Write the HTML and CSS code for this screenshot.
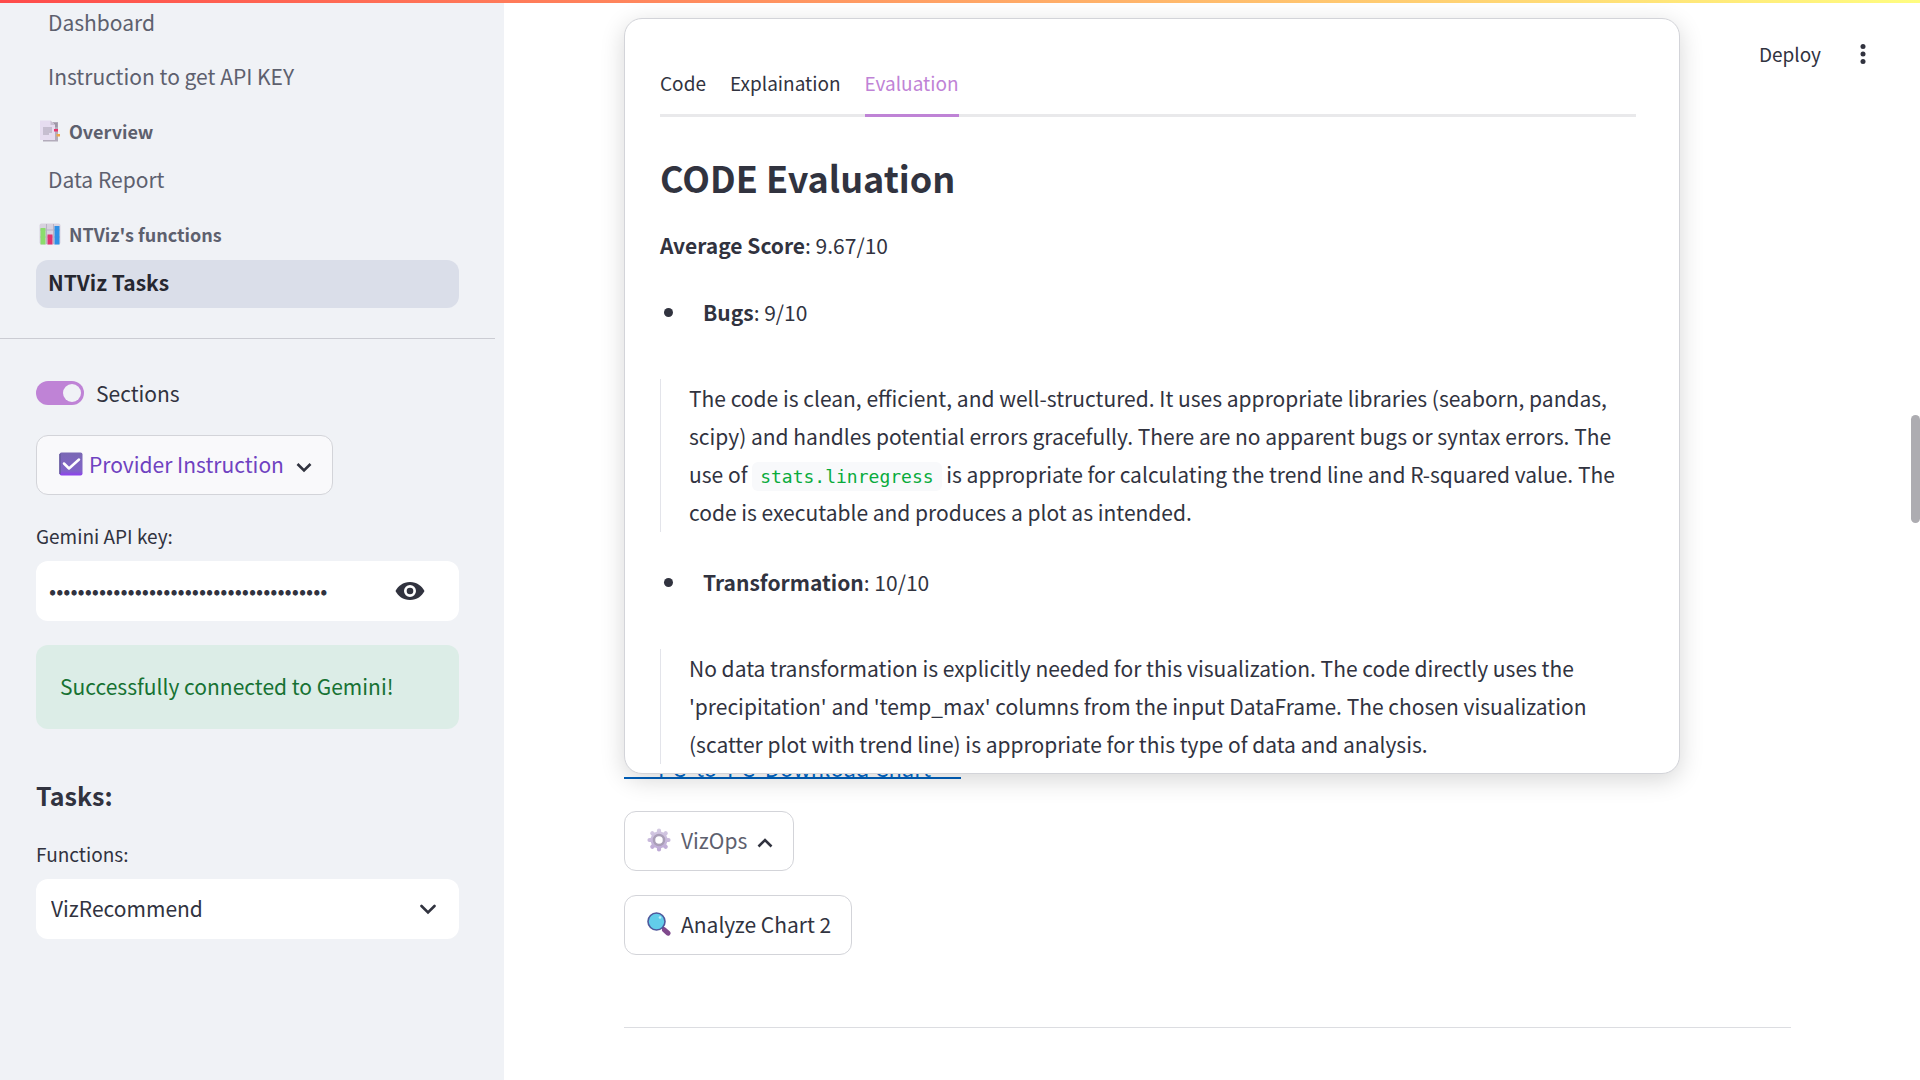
FILE: index.html
```
<!DOCTYPE html>
<html lang="en">
<head>
<meta charset="utf-8">
<title>NTViz Tasks</title>
<link rel="stylesheet" href="styles.css">
</head>
<body>
<div class="decoration"></div>
<div class="app">
  <aside class="sidebar">
    <nav class="nav">
      <a class="nav-link" href="#dashboard">Dashboard</a>
      <a class="nav-link" href="#instruction">Instruction to get API KEY</a>
      <div class="nav-section">
        <svg class="nav-icon" viewBox="0 0 22 22" aria-hidden="true">
          <path d="M4 2h15v19.500H4z" fill="#b3acbb"/>
          <path d="M15 3h3.500v4H15z" fill="#9d97a6"/>
          <path d="M1 .5h10.500l4.500 4.500v15H1z" fill="#e6dcf0"/>
          <path d="M11.500.5v4.500H16z" fill="#c9bfd2"/>
          <path d="M4 8h9M4 10h9M4 12h9M4 14h6" stroke="#a69fb0" stroke-width="1"/>
          <path d="M15 9h4v2.500h-4z" fill="#e8366f"/>
          <path d="M17.500 14h3.500v2.500h-3.500z" fill="#eea64c"/>
        </svg>
        <span>Overview</span>
      </div>
      <a class="nav-link" href="#report">Data Report</a>
      <div class="nav-section">
        <svg class="nav-icon" viewBox="0 0 22 22" aria-hidden="true">
          <rect x=".5" y=".5" width="21" height="21" rx="2" fill="#d8d2df"/>
          <path d="M7.500 1v20M14.500 1v20M1 7h20M1 14h20" stroke="#b9b2c4" stroke-width="1"/>
          <rect x="1.500" y="5" width="5" height="16.500" fill="#8bdc6c"/>
          <rect x="8.500" y="11.500" width="5" height="10" fill="#e0336f"/>
          <rect x="15.500" y="3" width="5" height="18.500" fill="#2e90e6"/>
        </svg>
        <span>NTViz's functions</span>
      </div>
      <a class="nav-link nav-link-active" href="#tasks">NTViz Tasks</a>
    </nav>
    <div class="controls">
      <label class="toggle"><input type="checkbox" checked><span>Sections</span></label>
      <button class="button button-provider" type="button">
        <svg class="button-icon" viewBox="0 0 24 24" aria-hidden="true">
          <defs><linearGradient id="tick" x1="0" y1="0" x2="0" y2="1"><stop offset="0" stop-color="#7a68b4"/><stop offset=".8" stop-color="#8163c8"/><stop offset="1" stop-color="#8f3ff0"/></linearGradient></defs>
          <rect x=".5" y=".5" width="23" height="23" rx="2" fill="url(#tick)"/>
          <path d="M1 2v20" stroke="#645a9c" stroke-width="1.500"/>
          <path d="M5 11.500l5 5L20 7.500" fill="none" stroke="#fff" stroke-width="2.500" stroke-linecap="round" stroke-linejoin="round"/>
        </svg>
        <span>Provider Instruction</span>
        <svg class="chevron" viewBox="0 0 16 16" aria-hidden="true"><path d="M1.500 5L8 11.500 14.500 5"/></svg>
      </button>
      <label class="field-label" for="api-key">Gemini API key:</label>
      <div class="field">
        <input class="field-input" id="api-key" type="password" value="abcdefghijklmnopqrstuvwxyz0123456789abc">
        <button class="eye" type="button" aria-label="Show password">
          <svg viewBox="0 0 30 20" aria-hidden="true">
            <path fill-rule="evenodd" d="M15 1C8 1 3 5 .5 10 3 15 8 19 15 19s12-4 14.500-9C27 5 22 1 15 1zm0 3a6 6 0 1 1 0 12 6 6 0 0 1 0-12zm0 2.700a3.300 3.300 0 1 0 0 6.600 3.300 3.300 0 0 0 0-6.600z"/>
          </svg>
        </button>
      </div>
      <div class="alert" role="status">Successfully connected to Gemini!</div>
      <h3 class="controls-title">Tasks:</h3>
      <label class="field-label" for="functions">Functions:</label>
      <div class="field">
        <select class="field-select" id="functions"><option>VizRecommend</option></select>
        <svg class="chevron" viewBox="0 0 16 16" aria-hidden="true"><path stroke-linecap="round" d="M1.500 5L8 11.500 14.500 5"/></svg>
      </div>
    </div>
  </aside>
  <main class="main">
    <a class="download" href="#download">PC&nbsp; to &nbsp;PC&nbsp; Download Chart</a>
    <button class="button button-muted" type="button">
      <svg class="button-icon" viewBox="0 0 24 24" aria-hidden="true">
        <defs><linearGradient id="gear" gradientUnits="userSpaceOnUse" x1="0" y1="0" x2="0" y2="24"><stop offset="0" stop-color="#d6cde3"/><stop offset="1" stop-color="#bba6d4"/></linearGradient></defs>
        <g stroke="url(#gear)" stroke-width="4.200" stroke-linecap="round">
          <path d="M12 2.500V21.500M2.500 12H21.500M5.300 5.300l13.400 13.400M18.700 5.300L5.300 18.700"/>
        </g>
        <circle cx="12" cy="12" r="8.500" fill="url(#gear)"/>
        <circle cx="12" cy="12" r="5" fill="#fff" stroke="#aa9fb8" stroke-width="2.500"/>
      </svg>
      <span>VizOps</span>
      <svg class="chevron" viewBox="0 0 16 16" aria-hidden="true"><path d="M1.500 11.500L8 5l6.500 6.500"/></svg>
    </button>
    <button class="button" type="button">
      <svg class="button-icon" viewBox="0 0 24 24" aria-hidden="true">
        <path d="M15.500 15.500l2 2" stroke="#5b4a85" stroke-width="3"/>
        <path d="M17.500 18l3.500 3.200" stroke="#80498c" stroke-width="5" stroke-linecap="round"/>
        <circle cx="9.500" cy="9.500" r="8.500" fill="#62cdea" stroke="#4f589c" stroke-width="1.600"/>
        <circle cx="13" cy="5.500" r="1.300" fill="#b9effa"/>
      </svg>
      <span>Analyze Chart 2</span>
    </button>
    <hr class="divider">
    <section class="popover" aria-label="VizOps">
      <div class="tabs" role="tablist">
        <button class="tab" type="button" role="tab">Code</button>
        <button class="tab" type="button" role="tab">Explaination</button>
        <button class="tab tab-active" type="button" role="tab" aria-selected="true">Evaluation</button>
      </div>
      <h2 class="report-title">CODE Evaluation</h2>
      <p class="report-score"><strong>Average Score</strong>: 9.67/10</p>
      <ul class="report-item"><li><strong>Bugs</strong>: 9/10</li></ul>
      <blockquote class="report-quote">The code is clean, efficient, and well-structured. It uses appropriate libraries (seaborn, pandas, scipy) and handles potential errors gracefully. There are no apparent bugs or syntax errors. The use of <code>stats.linregress</code> is appropriate for calculating the trend line and R-squared value. The code is executable and produces a plot as intended.</blockquote>
      <ul class="report-item"><li><strong>Transformation</strong>: 10/10</li></ul>
      <blockquote class="report-quote">No data transformation is explicitly needed for this visualization. The code directly uses the 'precipitation' and 'temp_max' columns from the input DataFrame. The chosen visualization (scatter plot with trend line) is appropriate for this type of data and analysis.</blockquote>
    </section>
    <div class="toolbar">
      <button class="deploy" type="button">Deploy</button>
      <button class="menu" type="button" aria-label="Menu">
        <svg viewBox="0 0 6 20" aria-hidden="true"><circle cx="3" cy="2.500" r="2.500"/><circle cx="3" cy="10" r="2.500"/><circle cx="3" cy="17.500" r="2.500"/></svg>
      </button>
    </div>
    <div class="scroll-thumb"></div>
  </main>
</div>
</body>
</html>
```
FILE: styles.css
```
* {
  box-sizing: border-box;
}

body {
  margin: 0;
  color: #31333f;
  background: #fff;
  font-family: "Noto Sans CJK JP", "Noto Sans", sans-serif;
  font-size: 21px;
  line-height: 38px;
}

button,
input,
select {
  margin: 0;
  padding: 0;
  border: 0;
  background: none;
  color: inherit;
  font: inherit;
}

strong {
  font-weight: 600;
}

.decoration {
  position: absolute;
  z-index: 3;
  top: 0;
  left: 0;
  right: 0;
  height: 3px;
  background: linear-gradient(90deg, #ff4b4b, #fffd80);
}

.app {
  display: grid;
  grid-template-columns: 504px 1fr;
  height: 100vh;
  overflow: hidden;
}

/* Sidebar */

.sidebar {
  background: #f0f2f6;
}

.nav {
  display: flex;
  flex-direction: column;
  margin-right: 9px;
  padding: 0 36px 30px;
  border-bottom: 1px solid #cbccd3;
}

.nav-link {
  height: 48px;
  padding: 0 12px;
  border-radius: 12px;
  color: #5d606e;
  line-height: 45px;
  text-decoration: none;
}

.nav-link + .nav-link {
  margin-top: 6px;
}

.nav-link-active {
  background: #dadee9;
  color: #262730;
  font-weight: 600;
}

.nav-section {
  display: flex;
  align-items: center;
  gap: 8px;
  height: 55px;
  padding: 2px 3px 0;
  color: #5d606e;
  font-size: 18px;
  font-weight: 600;
}

.nav-icon {
  width: 22px;
  height: 22px;
}

.controls {
  display: flex;
  flex-direction: column;
  align-items: stretch;
  padding: 35px 45px 0 36px;
}

.toggle {
  display: flex;
  align-items: center;
  gap: 12px;
}

.toggle input {
  display: flex;
  align-items: center;
  justify-content: flex-end;
  width: 48px;
  height: 24px;
  padding: 3px;
  border-radius: 12px;
  background: #bf83d6;
  appearance: none;
}

.toggle input::before {
  content: "";
  width: 18px;
  height: 18px;
  border-radius: 50%;
  background: #f0f2f6;
}

.button {
  display: flex;
  align-items: center;
  align-self: flex-start;
  gap: 10px;
  height: 60px;
  padding: 0 20px 2px 22px;
  border: 1px solid #d3d4d9;
  border-radius: 12px;
  background: #fff;
}

.button-icon {
  width: 24px;
  height: 24px;
}

.button-provider {
  gap: 6px;
  margin: 23px 0 22px;
  background: #f9f9fb;
  color: #6f42c1;
}

.button-muted {
  color: #5d606e;
}

.chevron {
  width: 16px;
  height: 16px;
  margin-top: 6px;
  fill: none;
  stroke: #31333f;
  stroke-width: 2.6;
}

.button-provider .chevron {
  margin-left: 6px;
}

.field-label {
  margin-bottom: 6px;
  font-size: 19px;
}

.field {
  display: flex;
  align-items: center;
  height: 60px;
  padding: 0 23px 0 13px;
  border-radius: 12px;
  background: #fff;
}

.field .chevron {
  margin-top: 0;
}

.field-input,
.field-select {
  flex: 1;
  min-width: 0;
  height: 60px;
  padding-bottom: 2px;
  appearance: none;
}

.field-select {
  padding-left: 2px;
}

.eye {
  width: 30px;
  height: 20px;
  margin-right: 11px;
}

.eye svg,
.menu svg {
  display: block;
  fill: #31333f;
}

.alert {
  margin: 24px 0 47px;
  padding: 22px 24px 24px;
  border-radius: 12px;
  background: #dcede7;
  color: #177233;
}

.controls-title {
  margin: 0 0 21px;
  font-size: 25px;
  font-weight: 600;
  line-height: 38px;
}

/* Main column */

.main {
  position: relative;
  display: flex;
  flex-direction: column;
  gap: 24px;
  padding: 740px 129px 0 120px;
}

.download {
  align-self: flex-start;
  height: 39px;
  margin-bottom: 8px;
  padding: 0 30px 0 34px;
  border-bottom: 2px solid #0060bb;
  color: #0068c9;
  font-size: 22px;
  line-height: 54px;
  text-decoration: none;
}

.divider {
  width: 100%;
  margin: 48px 0 0;
  border: 0;
  border-top: 1px solid #dcdde1;
}

/* The panel floats over the page content. */
.popover {
  position: absolute;
  z-index: 1;
  top: 18px;
  left: 120px;
  right: 240px;
  height: 756px;
  padding: 36px 43px 0 35px;
  overflow: hidden;
  border: 1px solid #d3d4d9;
  border-radius: 18px;
  background: #fff;
  box-shadow: 0 6px 24px rgba(0, 0, 0, .16);
}

.tabs {
  display: flex;
  gap: 24px;
  border-bottom: 3px solid #e9e9eb;
}

.tab {
  height: 62px;
  margin-bottom: -3px;
  padding-bottom: 4px;
  border-bottom: 3px solid transparent;
  font-size: 19px;
}

.tab-active {
  border-color: #bf83d6;
  color: #bf83d6;
}

.report-title {
  margin: 30px 0 19px;
  font-size: 36px;
  font-weight: 600;
  line-height: 60px;
}

.report-score {
  margin: 0 0 29px;
}

.report-item {
  margin: 0 0 48px;
  padding: 0;
  list-style: none;
}

.report-item li {
  display: flex;
  align-items: center;
  white-space: pre;
}

.report-item li::before {
  content: "";
  width: 9px;
  height: 9px;
  margin: 0 30px 0 4px;
  border-radius: 50%;
  background: #31333f;
}

.report-quote {
  margin: 0 0 31px;
  padding: 0 0 1px 28px;
  border-left: 1px solid #e3e4ea;
}

code {
  padding: 4px 8px;
  border-radius: 6px;
  background: #f8f9fb;
  color: #09ab3b;
  font-family: "DejaVu Sans Mono", monospace;
  font-size: 18px;
  line-height: 20px;
}

.toolbar {
  position: absolute;
  top: 35px;
  right: 54px;
  display: flex;
  align-items: center;
  gap: 39px;
}

.deploy {
  font-size: 19px;
}

.menu {
  width: 6px;
  height: 20px;
}

.scroll-thumb {
  position: absolute;
  top: 415px;
  right: 0;
  width: 9px;
  height: 108px;
  border-radius: 5px;
  background: #adacb1;
}
```
